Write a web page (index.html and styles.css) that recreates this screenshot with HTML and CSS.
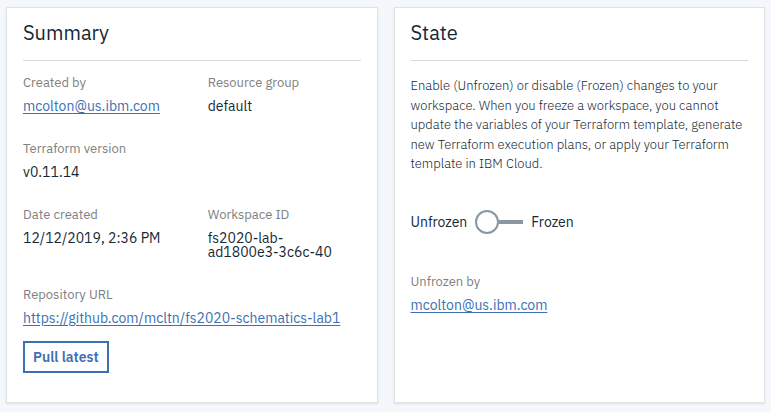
FILE: index.html
```html
<!DOCTYPE html>
<html lang="en">
<head>
<meta charset="utf-8">
<meta name="viewport" content="width=device-width, initial-scale=1">
<title>Workspace settings</title>
<link rel="stylesheet" href="styles.css">
</head>
<body>
<main class="cards">
  <section class="card">
    <h2 class="card-title">Summary</h2>
    <dl class="details">
      <div class="field">
        <dt>Created by</dt>
        <dd><a href="#">mcolton@us.ibm.com</a></dd>
      </div>
      <div class="field">
        <dt>Resource group</dt>
        <dd>default</dd>
      </div>
      <div class="field field-wide">
        <dt>Terraform version</dt>
        <dd>v0.11.14</dd>
      </div>
      <div class="field">
        <dt>Date created</dt>
        <dd>12/12/2019, 2:36 PM</dd>
      </div>
      <div class="field">
        <dt>Workspace ID</dt>
        <dd>fs2020-lab-ad1800e3-3c6c-40</dd>
      </div>
      <div class="field field-wide">
        <dt>Repository URL</dt>
        <dd><a href="#">https://github.com/mcltn/fs2020-schematics-lab1</a></dd>
      </div>
    </dl>
    <button class="button" type="button">Pull latest</button>
  </section>
  <section class="card">
    <h2 class="card-title">State</h2>
    <p class="description">Enable (Unfrozen) or disable (Frozen) changes to your workspace. When you freeze a workspace, you cannot update the variables of your Terraform template, generate new Terraform execution plans, or apply your Terraform template in IBM Cloud.</p>
    <label class="toggle">
      <span>Unfrozen</span>
      <input class="toggle-input" type="checkbox" role="switch">
      <span>Frozen</span>
    </label>
    <dl class="details">
      <div class="field field-wide">
        <dt>Unfrozen by</dt>
        <dd><a href="#">mcolton@us.ibm.com</a></dd>
      </div>
    </dl>
  </section>
</main>
</body>
</html>
```
FILE: styles.css
```css
*,
*::before,
*::after {
  box-sizing: border-box;
}

body {
  margin: 0;
  padding: 7px 6px 8px;
  background: #f4f7fb;
  color: #152935;
  font-family: "IBM Plex Sans", "Open Sans", sans-serif;
  font-size: 14px;
  line-height: 14px;
}

.cards {
  display: grid;
  grid-template-columns: 1fr 1fr;
  gap: 16px;
}

.card {
  padding: 12px 16px 29px;
  background: #fff;
  border: 1px solid #dfe3e6;
  box-shadow: 0 1px 2px rgba(0, 0, 0, 0.1);
}

.card-title {
  margin: 0 0 15px;
  padding-bottom: 14px;
  border-bottom: 1px solid #d8d8d8;
  font-size: 20px;
  font-weight: 400;
  line-height: 26px;
}

.details {
  display: grid;
  grid-template-columns: 1fr 1fr;
  gap: 29px 32px;
  margin: 0;
}

.field {
  min-width: 0;
  padding-right: 12px;
}

.field-wide {
  grid-column: 1 / -1;
  padding-right: 0;
}

dt {
  margin-bottom: 9px;
  color: #808080;
  font-size: 13px;
}

dd {
  margin: 0;
}

a {
  color: #3d70b2;
  text-underline-offset: 2px;
}

.button {
  display: block;
  margin-top: 16px;
  padding: 7px 8px;
  background: transparent;
  border: 2px solid #3d70b2;
  color: #3d70b2;
  font: inherit;
  font-weight: 600;
}

.description {
  margin: 0;
  font-size: 13px;
  font-weight: 300;
  line-height: 1.5;
}

.toggle {
  display: flex;
  align-items: center;
  gap: 8px;
  margin: 36px 0 41px;
}

.toggle-input {
  appearance: none;
  display: flex;
  align-items: center;
  width: 48px;
  height: 24px;
  margin: 0;
}

.toggle-input::before {
  content: "";
  flex: none;
  width: 24px;
  height: 24px;
  border: 2px solid #8897a2;
  border-radius: 50%;
}

.toggle-input::after {
  content: "";
  flex: 1;
  height: 4px;
  background: #8897a2;
}

.toggle-input:checked {
  flex-direction: row-reverse;
}
```
